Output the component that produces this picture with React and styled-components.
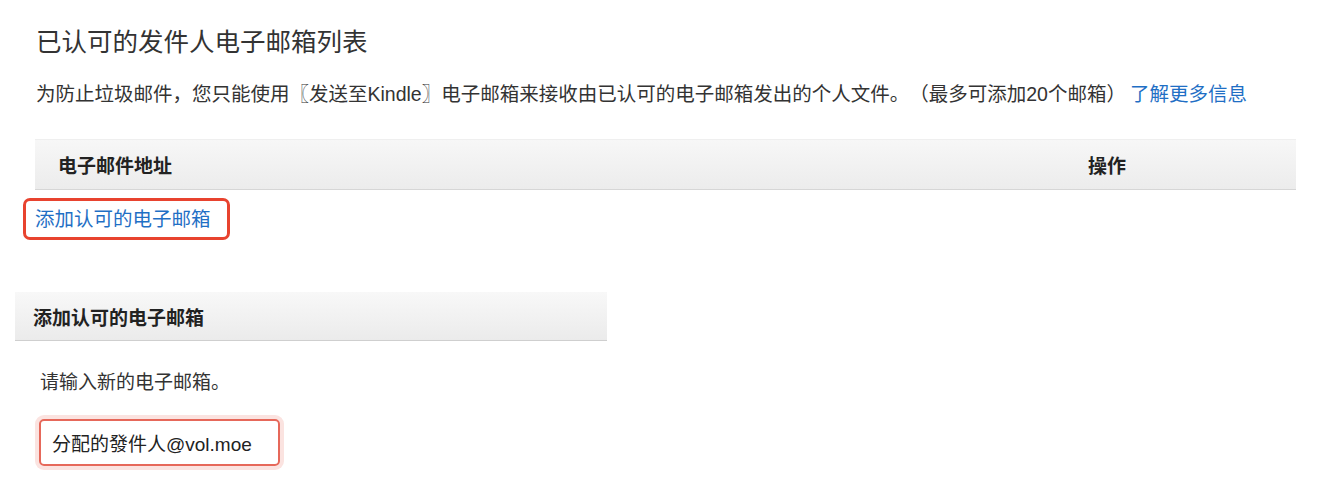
import React from "react";
import styled, { createGlobalStyle } from "styled-components";

const GlobalStyle = createGlobalStyle`
  html, body {
    margin: 0;
    padding: 0;
    background: #ffffff;
  }
  body {
    font-family: "Liberation Sans", "Noto Sans CJK SC", "Noto Sans", sans-serif;
    color: #333333;
    text-spacing-trim: space-all;
  }
`;

const Page = styled.div`
  width: 1320px;
  height: 504px;
  overflow: hidden;
  background: #ffffff;
`;

const ListSection = styled.section`
  padding: 27px 24px 0 35px;
`;

const Title = styled.h1`
  margin: 0 0 0 1px;
  font-size: 25.5px;
  line-height: 30px;
  font-weight: 400;
  color: #333333;
`;

const Intro = styled.p`
  margin: 25px 0 0 1px;
  font-size: 19.5px;
  line-height: 24px;
  color: #333333;
  white-space: nowrap;
`;

const Link = styled.a`
  color: #1f6fc5;
  text-decoration: none;
  margin-left: ${(p) => p.$gap || 0}px;
  font-size: 19.5px;
  line-height: 24px;
`;

const TableHead = styled.div`
  margin-top: 33px;
  height: 49px;
  display: grid;
  grid-template-columns: 1fr 208px;
  align-items: center;
  background: linear-gradient(to bottom, #f7f7f7, #ececec);
  border-top: 1px solid #efefef;
  border-bottom: 1px solid #d6d6d6;
`;

const HeadCell = styled.div`
  padding-left: ${(p) => p.$pad}px;
  font-size: 19px;
  font-weight: 700;
  color: #222222;
`;

const Highlight = styled.div`
  display: inline-block;
  margin: 8px 0 0 -12px;
  padding: 6px 16px 6px 9px;
  border: 3px solid #e8432f;
  border-radius: 7px;
`;

const AddSection = styled.section`
  margin-top: 52px;
  padding-left: 15px;
`;

const PanelHead = styled.div`
  width: 592px;
  height: 49px;
  display: flex;
  align-items: center;
  padding-left: 18px;
  box-sizing: border-box;
  background: linear-gradient(to bottom, #f8f8f8, #ebebeb);
  border-bottom: 1px solid #cfcfcf;
  font-size: 19px;
  font-weight: 700;
  color: #222222;
`;

const Prompt = styled.p`
  margin: 30px 0 0 25px;
  font-size: 19px;
  line-height: 24px;
  color: #333333;
`;

const EmailInput = styled.div`
  margin: 24px 0 0 24px;
  width: 241px;
  height: 47px;
  box-sizing: border-box;
  display: flex;
  align-items: center;
  padding-left: 11px;
  border: 2px solid #e6685a;
  border-radius: 5px;
  box-shadow: 0 0 0 4px #fbe3e0;
  font-size: 19px;
  color: #222222;
`;

export default function App() {
  return (
    <Page>
      <GlobalStyle />
      <ListSection>
        <Title>已认可的发件人电子邮箱列表</Title>
        <Intro>
          为防止垃圾邮件，您只能使用〖发送至Kindle〗电子邮箱来接收由已认可的电子邮箱发出的个人文件。（最多可添加20个邮箱）
          <Link href="#" $gap={4}>了解更多信息</Link>
        </Intro>
        <TableHead>
          <HeadCell $pad={23}>电子邮件地址</HeadCell>
          <HeadCell $pad={0}>操作</HeadCell>
        </TableHead>
        <Highlight>
          <Link href="#">添加认可的电子邮箱</Link>
        </Highlight>
      </ListSection>
      <AddSection>
        <PanelHead>添加认可的电子邮箱</PanelHead>
        <Prompt>请输入新的电子邮箱。</Prompt>
        <EmailInput>分配的發件人@vol.moe</EmailInput>
      </AddSection>
    </Page>
  );
}
